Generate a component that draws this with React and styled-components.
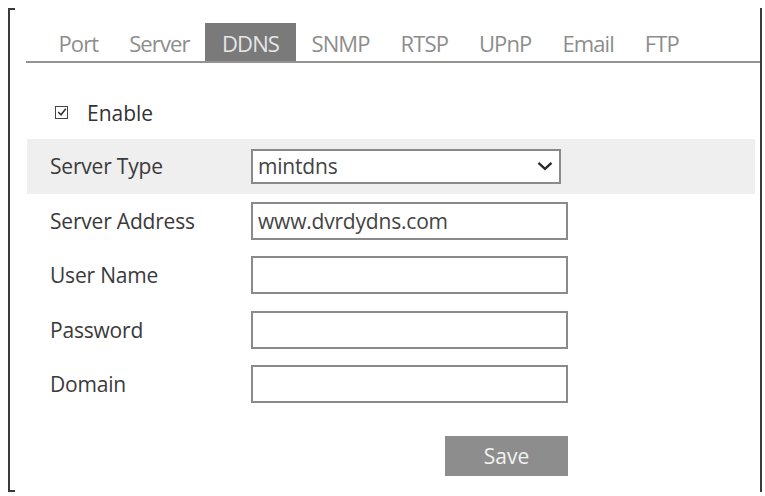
import React from "react";
import styled, { createGlobalStyle } from "styled-components";

const Global = createGlobalStyle`
  html, body { margin: 0; padding: 0; background: #fff; }
  body { font-family: "Open Sans", "Liberation Sans", sans-serif; }
  * { box-sizing: border-box; }
`;

const Page = styled.div`
  width: 765px;
  height: 496px;
  padding: 8px 3px 4px 8px;
  background: #fff;
`;

const Panel = styled.div`
  position: relative;
  height: 100%;
  border-left: 2px solid #3a3a3a;
  border-right: 2px solid #3a3a3a;
  padding-left: 16px;
  &::before,
  &::after {
    content: "";
    position: absolute;
    left: 0;
    width: 5px;
    height: 2px;
    background: #3a3a3a;
  }
  &::before { top: 0; }
  &::after { bottom: 0; }
`;

const TabBar = styled.div`
  display: flex;
  align-items: stretch;
  height: 55px;
  padding: 15px 0 0 17px;
  border-bottom: 2px solid #939393;
`;

const Tab = styled.div`
  display: flex;
  align-items: center;
  padding: 1px ${(p) => p.$pad}px 0 ${(p) => p.$pad}px;
  font-size: 22px;
  letter-spacing: -0.9px;
  color: ${(p) => (p.$active ? "#e6e6e6" : "#8d8d8d")};
  background: ${(p) => (p.$active ? "#7a7a7a" : "transparent")};
`;

const EnableRow = styled.label`
  display: flex;
  align-items: center;
  gap: 19px;
  height: 32px;
  margin: 34px 0 10px 29px;
  font-size: 21px;
  color: #333;
`;

const Check = styled.span`
  width: 13px;
  height: 13px;
  border: 1.5px solid #444;
  display: flex;
  align-items: center;
  justify-content: center;
  margin-top: -2px;
`;

const Form = styled.div`
  display: flex;
  flex-direction: column;
  margin-left: 1px;
  margin-right: 5px;
`;

const Row = styled.div`
  display: grid;
  grid-template-columns: 201px 317px;
  align-items: center;
  height: 54.5px;
  padding-left: 23px;
  background: ${(p) => (p.$shaded ? "#efefef" : "transparent")};
`;

const Label = styled.span`
  font-size: 21px;
  color: #3a3a3a;
  letter-spacing: -0.2px;
`;

const Field = styled.div`
  height: ${(p) => (p.$select ? 35 : 38)}px;
  width: ${(p) => (p.$select ? 310 : 317)}px;
  border: 2px solid #8a8a8a;
  background: #fff;
  display: flex;
  align-items: center;
  justify-content: space-between;
  padding: 0 6px 0 5px;
  font-size: 21px;
  color: #444;
  letter-spacing: -0.2px;
`;

const SaveRow = styled.div`
  display: grid;
  grid-template-columns: 201px 317px;
  padding-left: 23px;
  margin-top: 24px;
`;

const SaveButton = styled.button`
  grid-column: 2;
  justify-self: end;
  width: 123px;
  height: 40px;
  border: none;
  background: #8d8d8d;
  color: #f2f2f2;
  font-family: "Open Sans", "Liberation Sans", sans-serif;
  font-size: 21px;
  padding: 0;
`;

const tabs = [
  { name: "Port" },
  { name: "Server" },
  { name: "DDNS", active: true },
  { name: "SNMP" },
  { name: "RTSP" },
  { name: "UPnP" },
  { name: "Email" },
  { name: "FTP" },
];

const fields = [
  { label: "Server Address", value: "www.dvrdydns.com" },
  { label: "User Name", value: "" },
  { label: "Password", value: "" },
  { label: "Domain", value: "" },
];

function Chevron() {
  return (
    <svg width="16" height="10" viewBox="0 0 16 10">
      <path d="M1.5 1.8 L8 7.8 L14.5 1.8" fill="none" stroke="#2b2b2b" strokeWidth="2.4" />
    </svg>
  );
}

function Tick() {
  return (
    <svg width="10" height="10" viewBox="0 0 10 10">
      <path d="M1.2 5 L4 7.8 L8.8 1.8" fill="none" stroke="#333" strokeWidth="1.6" />
    </svg>
  );
}

export default function App() {
  return (
    <>
      <Global />
      <Page>
        <Panel>
          <TabBar>
            {tabs.map((t) => (
              <Tab key={t.name} $active={t.active} $pad={t.active ? 17 : 15.5}>
                {t.name}
              </Tab>
            ))}
          </TabBar>
          <EnableRow>
            <Check>
              <Tick />
            </Check>
            Enable
          </EnableRow>
          <Form>
            <Row $shaded>
              <Label>Server Type</Label>
              <Field $select>
                <span>mintdns</span>
                <Chevron />
              </Field>
            </Row>
            {fields.map((f) => (
              <Row key={f.label}>
                <Label>{f.label}</Label>
                <Field>{f.value}</Field>
              </Row>
            ))}
            <SaveRow>
              <SaveButton>Save</SaveButton>
            </SaveRow>
          </Form>
        </Panel>
      </Page>
    </>
  );
}
